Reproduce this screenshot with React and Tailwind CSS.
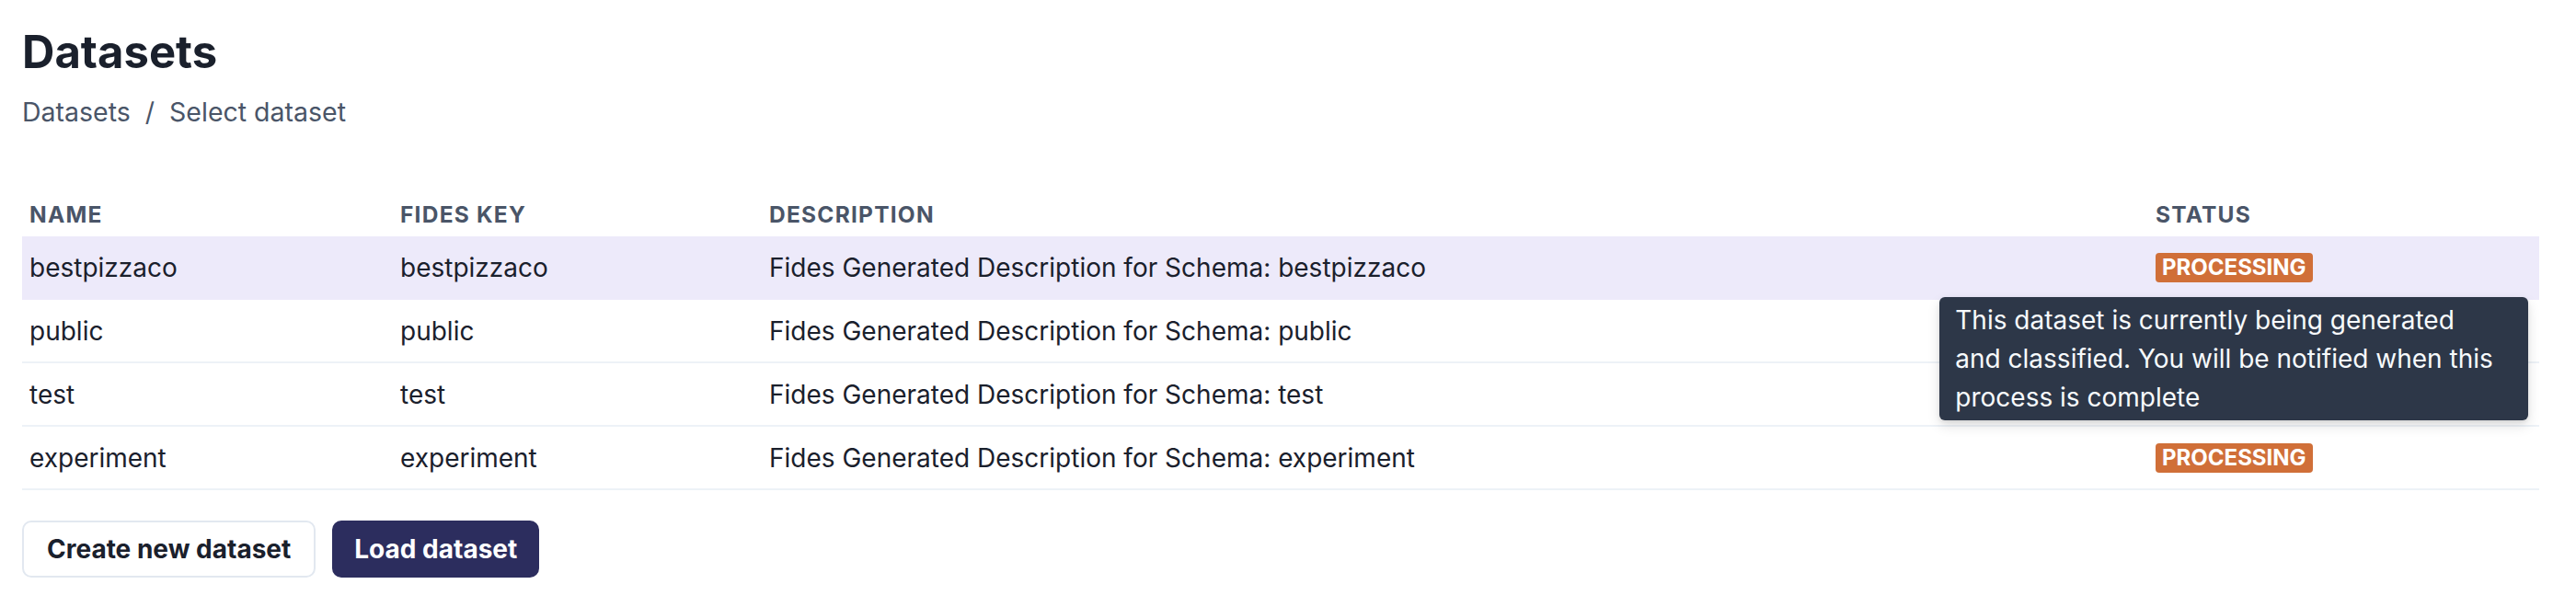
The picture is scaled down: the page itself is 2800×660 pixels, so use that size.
export default function App() {
  const rows = [
    { name: "bestpizzaco", desc: "Fides Generated Description for Schema: bestpizzaco", status: true, highlight: true, tooltip: true },
    { name: "public", desc: "Fides Generated Description for Schema: public", status: false },
    { name: "test", desc: "Fides Generated Description for Schema: test", status: false },
    { name: "experiment", desc: "Fides Generated Description for Schema: experiment", status: true },
  ];
  const cols = "grid grid-cols-[403px_401px_1507px_425px]";
  return (
    <div className="min-h-[660px] bg-white pl-[24px] pr-[40px] pt-[27px] font-['Inter',sans-serif]">
      <h1 className="text-[49px] leading-[60px] font-bold text-[#1A202C]">Datasets</h1>
      <nav className="mt-[14px] flex text-[28.5px] leading-[42px] text-[#4A5568]">
        <span>Datasets</span>
        <span className="mx-[16px]">/</span>
        <span>Select dataset</span>
      </nav>

      <div className="mt-[62px] w-[2736px]">
        <div className={`${cols} text-[24.5px] leading-[36px] font-bold uppercase tracking-[0.05em] text-[#4A5568]`}>
          {["Name", "Fides key", "Description", "Status"].map((h) => (
            <div key={h} className="px-[8px] pt-[10px] pb-[6px]">{h}</div>
          ))}
        </div>
        {rows.map((r) => (
          <div
            key={r.name}
            className={`${cols} h-[69px] items-center border-b-2 text-[28px] leading-[42px] text-[#1A202C] ${
              r.highlight ? "bg-[#EDEAFA] border-[#EDEAFA]" : "border-[#EDF2F7]"
            }`}
          >
            <div className="px-[8px]">{r.name}</div>
            <div className="px-[8px]">{r.name}</div>
            <div className="px-[8px] whitespace-nowrap">{r.desc}</div>
            <div className="px-[8px] flex">
              {r.status && (
                <div className="relative">
                  <span className="flex h-[32px] items-center rounded-[4px] bg-[#D06F38] px-[7px] text-[24px] font-bold uppercase leading-[32px] text-white">
                    Processing
                  </span>
                  {r.tooltip && (
                    <div className="absolute left-1/2 top-[calc(100%+16px)] z-10 w-[640px] -translate-x-1/2 rounded-[6px] bg-[#2D3748] px-[17px] py-[4px] text-[28px] leading-[42px] text-[#F7FAFC] whitespace-nowrap shadow-[0_6px_14px_rgba(0,0,0,0.12),0_2px_4px_rgba(0,0,0,0.08)]">
                      This dataset is currently being generated
                      <br />
                      and classified. You will be notified when this
                      <br />
                      process is complete
                    </div>
                  )}
                </div>
              )}
            </div>
          </div>
        ))}
      </div>

      <div className="mt-[33px] flex gap-[18px]">
        <button className="h-[62px] rounded-[10px] border-2 border-[#E2E8F0] bg-white px-[25px] text-[28px] font-bold text-[#1A202C]">
          Create new dataset
        </button>
        <button className="h-[62px] rounded-[10px] bg-[#2C2D5E] px-[24px] text-[28px] font-bold text-white">
          Load dataset
        </button>
      </div>
    </div>
  );
}
